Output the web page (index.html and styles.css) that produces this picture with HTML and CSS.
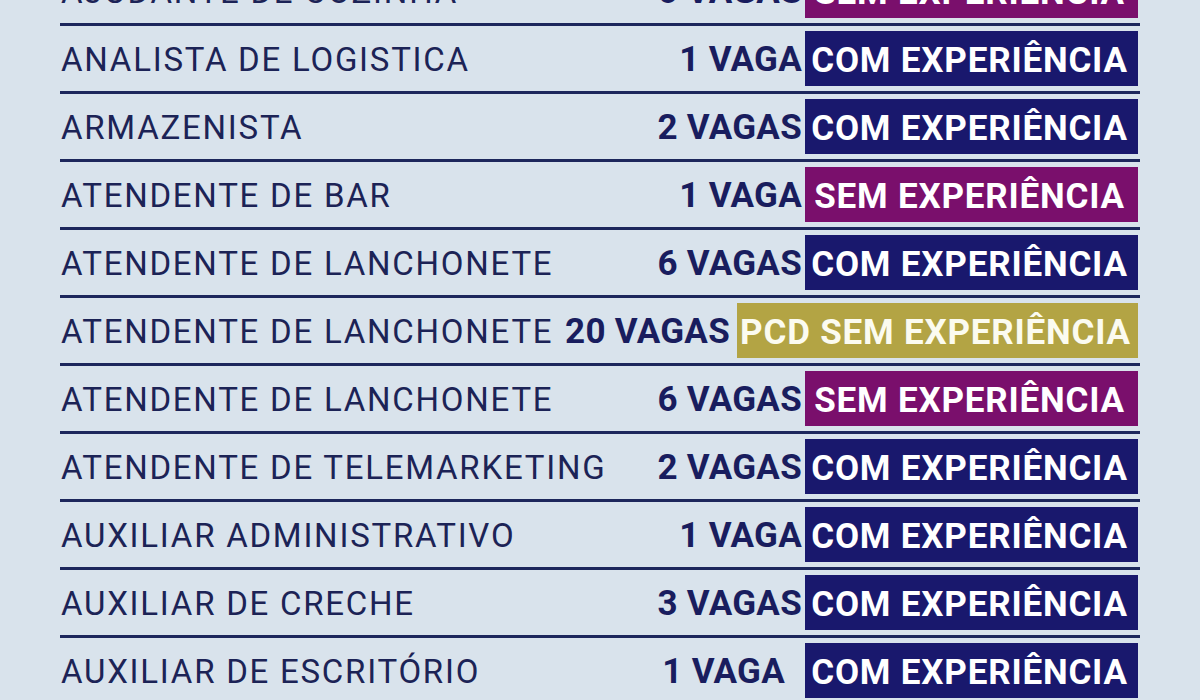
FILE: index.html
```html
<!DOCTYPE html>
<html lang="pt-BR">
<head>
<meta charset="utf-8">
<title>Vagas</title>
<link rel="stylesheet" href="styles.css">
</head>
<body>
<div class="list">
  <div class="row first">
    <span class="name">AJUDANTE DE COZINHA</span>
    <span class="qty">6 VAGAS</span>
    <span class="badge sem">SEM EXPERIÊNCIA</span>
  </div>
  <div class="row">
    <span class="name">ANALISTA DE LOGISTICA</span>
    <span class="qty">1 VAGA</span>
    <span class="badge com">COM EXPERIÊNCIA</span>
  </div>
  <div class="row">
    <span class="name">ARMAZENISTA</span>
    <span class="qty">2 VAGAS</span>
    <span class="badge com">COM EXPERIÊNCIA</span>
  </div>
  <div class="row">
    <span class="name">ATENDENTE DE BAR</span>
    <span class="qty">1 VAGA</span>
    <span class="badge sem">SEM EXPERIÊNCIA</span>
  </div>
  <div class="row">
    <span class="name">ATENDENTE DE LANCHONETE</span>
    <span class="qty">6 VAGAS</span>
    <span class="badge com">COM EXPERIÊNCIA</span>
  </div>
  <div class="row">
    <span class="name">ATENDENTE DE LANCHONETE</span>
    <span class="qty qty-pcd">20 VAGAS</span>
    <span class="badge pcd">PCD SEM EXPERIÊNCIA</span>
  </div>
  <div class="row">
    <span class="name">ATENDENTE DE LANCHONETE</span>
    <span class="qty">6 VAGAS</span>
    <span class="badge sem">SEM EXPERIÊNCIA</span>
  </div>
  <div class="row">
    <span class="name">ATENDENTE DE TELEMARKETING</span>
    <span class="qty">2 VAGAS</span>
    <span class="badge com">COM EXPERIÊNCIA</span>
  </div>
  <div class="row">
    <span class="name">AUXILIAR ADMINISTRATIVO</span>
    <span class="qty">1 VAGA</span>
    <span class="badge com">COM EXPERIÊNCIA</span>
  </div>
  <div class="row">
    <span class="name">AUXILIAR DE CRECHE</span>
    <span class="qty">3 VAGAS</span>
    <span class="badge com">COM EXPERIÊNCIA</span>
  </div>
  <div class="row">
    <span class="name">AUXILIAR DE ESCRITÓRIO</span>
    <span class="qty qty-wide">1 VAGA</span>
    <span class="badge com">COM EXPERIÊNCIA</span>
  </div>
</div>
</body>
</html>
```

FILE: styles.css
```css
html, body {
  margin: 0;
  padding: 0;
}

body {
  background: #d9e3ec;
  width: 1200px;
  height: 700px;
  overflow: hidden;
  font-family: Roboto, "Liberation Sans", sans-serif;
}

.list {
  width: 1080px;
  margin-left: 60px;
  margin-top: -45px;
  display: flex;
  flex-direction: column;
}

.row {
  height: 65px;
  border-top: 3px solid #1d275c;
  display: flex;
  align-items: center;
}

.name {
  flex: 1;
  padding-left: 1px;
  padding-top: 2px;
  font-size: 33px;
  font-weight: 400;
  letter-spacing: 1.75px;
  color: #1c2356;
  white-space: nowrap;
}

.qty {
  padding-top: 2px;
  margin-right: 3px;
  font-size: 35px;
  font-weight: 700;
  letter-spacing: 0.3px;
  color: #191d5e;
  white-space: nowrap;
}

.qty-pcd {
  margin-right: 7px;
}

.qty-wide {
  margin-right: 20px;
}

.badge {
  width: 333px;
  height: 55px;
  margin-right: 2px;
  display: flex;
  align-items: center;
  justify-content: center;
  padding-top: 3px;
  padding-right: 4px;
  box-sizing: border-box;
  font-size: 35px;
  font-weight: 700;
  letter-spacing: 0.8px;
  color: #ffffff;
  white-space: nowrap;
}

.com {
  background: #19186d;
}

.sem {
  background: #7a0f6c;
}

.pcd {
  width: 401px;
  background: #b3a444;
  color: #fbfbf0;
}
```
